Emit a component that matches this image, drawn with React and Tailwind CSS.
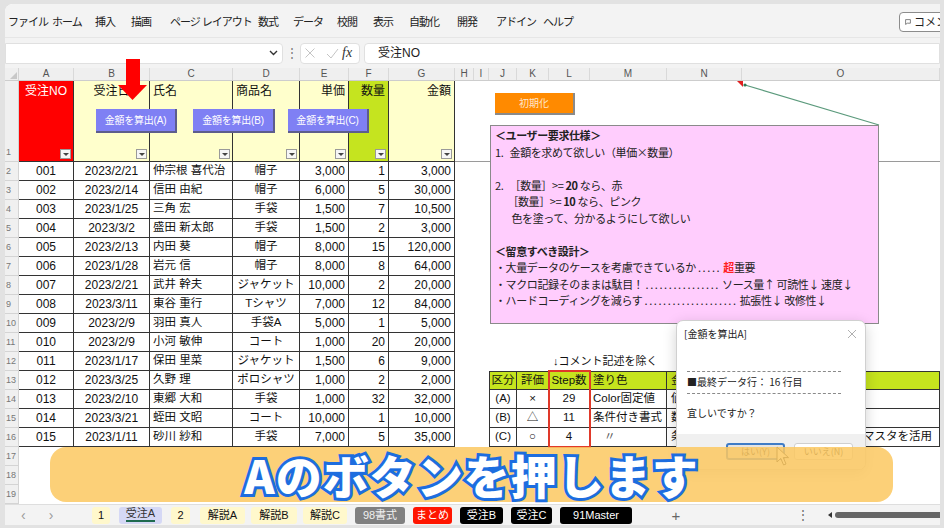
import React from 'react';

const data = [
  ['001', '2023/2/21', '仲宗根 喜代治', '帽子', '3,000', '1', '3,000'],
  ['002', '2023/2/14', '信田 由紀', '帽子', '6,000', '5', '30,000'],
  ['003', '2023/1/25', '三角 宏', '手袋', '1,500', '7', '10,500'],
  ['004', '2023/3/2', '盛田 新太郎', '手袋', '1,500', '2', '3,000'],
  ['005', '2023/2/13', '内田 葵', '帽子', '8,000', '15', '120,000'],
  ['006', '2023/1/28', '岩元 信', '帽子', '8,000', '8', '64,000'],
  ['007', '2023/2/21', '武井 幹夫', 'ジャケット', '10,000', '2', '20,000'],
  ['008', '2023/3/11', '東谷 重行', 'Tシャツ', '7,000', '12', '84,000'],
  ['009', '2023/2/9', '羽田 真人', '手袋A', '5,000', '1', '5,000'],
  ['010', '2023/2/9', '小河 敏伸', 'コート', '1,000', '20', '20,000'],
  ['011', '2023/1/17', '保田 里菜', 'ジャケット', '1,500', '6', '9,000'],
  ['012', '2023/3/25', '久野 理', 'ポロシャツ', '1,000', '2', '2,000'],
  ['013', '2023/2/10', '東郷 大和', '手袋', '1,000', '32', '32,000'],
  ['014', '2023/3/21', '蛭田 文昭', 'コート', '10,000', '1', '10,000'],
  ['015', '2023/1/11', '砂川 紗和', '手袋', '7,000', '5', '35,000'],
];

const cellCls = [
  'w-[55px] justify-center',
  'w-[76px] justify-center',
  'w-[83px] justify-start pl-[3px] text-[11.5px]',
  'w-[67px] justify-center text-[11.5px]',
  'w-[49px] justify-end pr-[3px]',
  'w-[40px] justify-end pr-[3px]',
  'w-[66px] justify-end pr-[3px]',
];

const hdrCols = [
  ['A', 'w-[55px]'], ['B', 'w-[76px]'], ['C', 'w-[83px]'], ['D', 'w-[67px]'], ['E', 'w-[49px]'],
  ['F', 'w-[40px]'], ['G', 'w-[66px]'], ['H', 'w-[19px]'], ['I', 'w-[15px]'], ['J', 'w-[28px]'],
  ['K', 'w-[32px]'], ['L', 'w-[41px]'], ['M', 'w-[77px]'], ['N', 'w-[75px]'], ['O', 'flex-1'],
];

const ribbonTabs = [
  ['ファイル', 'w-[44px]'], ['ホーム', 'w-[43px]'], ['挿入', 'w-[36px]'], ['描画', 'w-[39px]'],
  ['ページ レイアウト', 'w-[88px]'], ['数式', 'w-[35px]'], ['データ', 'w-[44px]'], ['校閲', 'w-[36px]'],
  ['表示', 'w-[36px]'], ['自動化', 'w-[48px]'], ['開発', 'w-[39px]'], ['アドイン', 'w-[47px]'], ['ヘルプ', 'w-[40px]'],
];

const sheetTabs = [
  ['1', 'w-[18px] bg-[#fff8cc]'],
  ['受注A', 'ml-[9px] w-[43px] bg-[#d5d8f5]'],
  ['2', 'ml-[9px] w-[19px] bg-[#fff8cc]'],
  ['解説A', 'ml-[10px] w-[45px] bg-[#fff8cc]'],
  ['解説B', 'ml-[6px] w-[46px] bg-[#fff8cc]'],
  ['解説C', 'ml-[6px] w-[44px] bg-[#fff8cc]'],
  ['98書式', 'ml-[8px] w-[50px] bg-[#808080] text-[#f0f0f0]'],
  ['まとめ', 'ml-[8px] w-[39px] bg-[#ff1500] text-white'],
  ['受注B', 'ml-[8px] w-[43px] bg-black text-white'],
  ['受注C', 'ml-[8px] w-[41px] bg-black text-white'],
  ['91Master', 'ml-[8px] w-[72px] bg-black text-white'],
];

const rt = [
  ['区分', '評価', 'Step数', '塗り色', '金額算出の方法'],
  ['(A)', '×', '29', 'Color固定値', '値を直接書込み'],
  ['(B)', '△', '11', '条件付き書式', '数式で計算'],
  ['(C)', '○', '4', '〃', null],
];

function RowHdr({ n, tall }) {
  return (
    <div className={`w-[14px] shrink-0 bg-[#f0f0f0] border-r border-b border-[#d4d4d4] text-[9px] text-[#777] flex pl-[1px] leading-none ${tall ? 'items-end pb-[4px]' : 'items-center'}`}>
      {n}
    </div>
  );
}

function Filter() {
  return (
    <div className="absolute right-[2px] bottom-[2px] w-[11px] h-[10px] bg-[#f6f6f6] border border-[#9a9a9a] flex items-center justify-center">
      <div className="w-0 h-0 border-l-[3px] border-r-[3px] border-t-[3px] border-l-transparent border-r-transparent border-t-[#444]" />
    </div>
  );
}

function Ribbon() {
  return (
    <div className="h-[33px] shrink-0 bg-[#f3f3f3] flex items-center pl-[3px] pt-[3px] text-[11px] text-[#222] tracking-[-1px] overflow-hidden">
      {ribbonTabs.map(([t, w]) => (
        <div key={t} className={`${w} shrink-0 whitespace-nowrap`}>{t}</div>
      ))}
      <div className="ml-auto mr-[-19px] w-[60px] h-[20px] shrink-0 border border-[#8c8c8c] rounded-[4px] bg-white flex items-center gap-[3px] pl-[5px] text-[11px] tracking-normal whitespace-nowrap">
        <svg width="10" height="10" viewBox="0 0 10 10"><path d="M1 1h8v6H4L1 9z" fill="none" stroke="#333" strokeWidth="1" /></svg>
        コメント
      </div>
    </div>
  );
}

function FormulaBar() {
  return (
    <div className="h-[31px] shrink-0 bg-[#f3f3f3] flex items-center border-t border-[#e6e6e6]">
      <div className="w-[278px] h-[21px] bg-white rounded-r-[4px] border border-[#e0e0e0] flex items-center justify-end pr-[4px]">
        <svg width="9" height="6" viewBox="0 0 9 6"><path d="M1 1l3.5 3.5L8 1" fill="none" stroke="#333" strokeWidth="1.4" /></svg>
      </div>
      <div className="w-[17px] text-center text-[#777] text-[12px] leading-none">⋮</div>
      <div className="w-[60px] h-[21px] bg-white rounded-[4px] border border-[#e0e0e0] flex items-center pl-[3px]">
        <svg width="12" height="12" viewBox="0 0 12 12"><path d="M1.5 1.5l9 9M10.5 1.5l-9 9" stroke="#c4c4c4" strokeWidth="1" /></svg>
        <svg className="ml-[10px]" width="13" height="11" viewBox="0 0 13 11"><path d="M1 6l4 4 7-9" fill="none" stroke="#c4c4c4" strokeWidth="1" /></svg>
        <span className="ml-[3px] font-['Liberation_Serif',serif] italic text-[14px] text-[#333] leading-none">fx</span>
      </div>
      <div className="ml-[4px] flex-1 h-[21px] bg-white rounded-l-[4px] border border-[#e0e0e0] flex items-center pl-[13px] text-[12px] text-[#222]">受注NO</div>
    </div>
  );
}

function ColHeader() {
  return (
    <div className="h-[13px] shrink-0 flex bg-[#efefef] border-b border-[#cdcdcd] text-[10px] text-[#555] leading-none">
      <div className="w-[14px] shrink-0 border-r border-[#d4d4d4] relative">
        <div className="absolute right-[1px] bottom-[1px] w-0 h-0 border-l-[7px] border-t-[7px] border-l-transparent border-t-transparent border-b-0 border-r-0 [border-bottom:7px_solid_#c8c8c8]" />
      </div>
      {hdrCols.map(([l, w]) => (
        <div key={l} className={`${w} shrink-0 border-r border-[#d9d9d9] flex items-center justify-center`}>{l}</div>
      ))}
    </div>
  );
}

function Row1() {
  return (
    <div className="flex h-[81px] shrink-0 text-[12px] leading-[16px]">
      <RowHdr n={1} tall />
      <div className="relative w-[55px] bg-[#ff0000] border-r border-b border-[#333] text-white text-center pt-[2px]">受注NO<Filter /></div>
      <div className="relative w-[76px] bg-[#ffffcc] border-r border-b border-[#333] text-center pt-[2px]">受注日<Filter /></div>
      <div className="relative w-[83px] bg-[#ffffcc] border-r border-b border-[#333] pl-[3px] pt-[2px]">氏名<Filter /></div>
      <div className="relative w-[67px] bg-[#ffffcc] border-r border-b border-[#333] pl-[3px] pt-[2px]">商品名<Filter /></div>
      <div className="relative w-[49px] bg-[#ffffcc] border-r border-b border-[#333] text-right pr-[3px] pt-[2px]">単価<Filter /></div>
      <div className="relative w-[40px] bg-[#c5e41f] border-r border-b border-[#333] text-right pr-[3px] pt-[2px]">数量<Filter /></div>
      <div className="relative w-[66px] bg-[#ffffcc] border-r border-b border-[#333] text-right pr-[3px] pt-[2px]">金額<Filter /></div>
      <div className="flex-1 border-b border-[#9a9a9a]" />
    </div>
  );
}

function RightPart({ n }) {
  if (n === 12) {
    return (
      <div className="flex-1 flex">
        <div className="w-[94px] shrink-0" />
        <div className="w-[118px] shrink-0 flex items-center pl-[4px] text-[11px] whitespace-nowrap">↓コメント記述を除く</div>
      </div>
    );
  }
  if (n >= 13 && n <= 16) {
    const r = rt[n - 13];
    const head = n === 13;
    const base = `border-r border-b border-[#333] flex items-center whitespace-nowrap overflow-hidden ${head ? 'bg-[#c6e41e] border-t' : 'bg-white'}`;
    return (
      <div className="flex-1 flex">
        <div className="w-[34px] shrink-0" />
        <div className={`w-[28px] shrink-0 border-l justify-center text-[11.5px] ${base}`}>{r[0]}</div>
        <div className={`w-[32px] shrink-0 justify-center text-[11.5px] ${base}`}>{r[1]}</div>
        <div className={`w-[41px] shrink-0 justify-center text-[11.5px] ${base}`}>{r[2]}</div>
        <div className={`w-[77px] shrink-0 justify-start text-[11.5px] ${n === 16 ? 'pl-[14px] text-[#555]' : 'pl-[3px]'} ${base}`}>{r[3]}</div>
        <div className={`flex-1 justify-start pl-[4px] text-[11.5px] ${base}`}>
          {r[4] !== null ? r[4] : (
            <>
              <span className="w-[192px] shrink-0 overflow-hidden">条件付き書式＋色</span>
              <span>マスタを活用</span>
            </>
          )}
        </div>
      </div>
    );
  }
  return <div className="flex-1" />;
}

function DataRow({ n }) {
  const r = data[n - 2];
  return (
    <div className="flex h-[19px] shrink-0 text-[12px]">
      <RowHdr n={n} />
      {r ? (
        r.map((v, i) => (
          <div key={i} className={`${cellCls[i]} shrink-0 border-r border-b border-[#333] flex items-center whitespace-nowrap`}>{v}</div>
        ))
      ) : (
        <div className="w-[436px] shrink-0" />
      )}
      <RightPart n={n} />
    </div>
  );
}

function TabBar() {
  return (
    <div className="h-[21px] shrink-0 bg-[#f3f3f3] flex items-center text-[11px] border-t border-[#dedede]">
      <div className="w-[87px] shrink-0 flex items-center text-[#9a9a9a] text-[14px] leading-none">
        <span className="ml-[16px]">‹</span>
        <span className="ml-[23px]">›</span>
      </div>
      {sheetTabs.map(([t, c]) => (
        <div key={t} className={`${c} h-[17px] shrink-0 rounded-[3px] flex items-center justify-center whitespace-nowrap leading-none`}>
          {t === '受注A' ? <span className="border-b-2 border-[#1f6b4f] pb-[1px] text-[#333]">{t}</span> : t}
        </div>
      ))}
      <div className="w-[88px] shrink-0 text-center text-[#666] text-[15px] leading-none">+</div>
      <div className="ml-[77px] w-[12px] shrink-0 text-center text-[#666] text-[12px] leading-none">⋮</div>
      <div className="ml-[19px] flex-1 flex items-center gap-[3px]">
        <div className="w-0 h-0 border-t-[3px] border-b-[3px] border-r-[4px] border-t-transparent border-b-transparent border-r-[#333]" />
        <div className="flex-1 h-[6px] rounded-l-full bg-[#666]" />
      </div>
    </div>
  );
}

function BlueBtn({ label, cls }) {
  return (
    <div className={`absolute ${cls} top-[109px] h-[24px] bg-[#7f80f4] border-r-2 border-b-2 border-[#5d5d8c] flex items-center justify-center text-white text-[10px] tracking-[-0.2px] whitespace-nowrap`}>
      {label}
    </div>
  );
}

function Dots({ children }) {
  return <span className="tracking-[1.6px]">{children}</span>;
}

export default function App() {
  return (
    <div className="relative w-[944px] h-[528px] bg-[#e2e2e2] pt-[4px] pl-[5px] pr-[4px] pb-[3px] overflow-hidden font-['Liberation_Sans','Noto_Sans_CJK_JP',sans-serif] text-[#111]">
      <div className="h-full flex flex-col bg-white rounded-tl-[8px] overflow-hidden">
        <Ribbon />
        <FormulaBar />
        <ColHeader />
        <Row1 />
        {Array.from({ length: 18 }).map((_, i) => (
          <DataRow key={i} n={i + 2} />
        ))}
        <TabBar />
      </div>

      {/* red arrow */}
      <svg className="absolute left-[117px] top-[59px]" width="30" height="42" viewBox="0 0 30 42">
        <rect x="9" y="0" width="14" height="27" fill="#ff0000" />
        <polygon points="1,26 30,26 15.5,41" fill="#ff0000" />
      </svg>

      <BlueBtn label="金額を算出(A)" cls="left-[96px] w-[81px]" />
      <BlueBtn label="金額を算出(B)" cls="left-[193px] w-[82px]" />
      <BlueBtn label="金額を算出(C)" cls="left-[288px] w-[81px]" />

      {/* orange button */}
      <div className="absolute left-[495px] top-[93px] w-[80px] h-[22px] bg-[#ff8a00] border-r-2 border-b-2 border-[#8a8a8a] flex items-center justify-center text-[10px] text-[#ffe6cc]">初期化</div>

      {/* comment connector */}
      <svg className="absolute left-[735px] top-[78px]" width="150" height="52" viewBox="0 0 150 52">
        <polygon points="2,3 8,3 8,9" fill="#e02020" />
        <line x1="10" y1="7" x2="144" y2="47" stroke="#5b9a7c" strokeWidth="1.2" />
        <circle cx="10" cy="7" r="1.6" fill="#2f7a55" />
      </svg>

      {/* pink note */}
      <div className="absolute left-[490px] top-[125px] w-[389px] h-[199px] bg-[#ffcdfd] border border-[#8a8a8a] pl-[4px] pt-[1px] text-[11px] leading-[16.5px] tracking-[-0.4px] font-['Noto_Sans_CJK_JP','Liberation_Sans',sans-serif] text-[#222] whitespace-pre">
        <div className="font-bold">＜ユーザー要求仕様＞</div>
        <div>1.   金額を求めて欲しい（単価×数量）</div>
        <div>&nbsp;</div>
        <div>2.   ［数量］&gt;= <b>20</b> なら、赤</div>
        <div>      ［数量］&gt;= <b>10</b> なら、ピンク</div>
        <div>        色を塗って、分かるようにして欲しい</div>
        <div>&nbsp;</div>
        <div className="font-bold">＜留意すべき設計＞</div>
        <div>・大量データのケースを考慮できているか <Dots>.....</Dots> <span className="text-[#ff2020] font-bold">超</span>重要</div>
        <div>・マクロ記録そのままは駄目！ <Dots>................</Dots> ソース量↑ 可読性↓ 速度↓</div>
        <div>・ハードコーディングを減らす <Dots>....................</Dots> 拡張性↓ 改修性↓</div>
      </div>

      {/* Step count red frame */}
      <div className="absolute left-[548px] top-[370px] w-[43px] h-[78px] border-2 border-[#e0392a]" />

      {/* dialog */}
      <div className="absolute left-[676px] top-[320px] w-[190px] h-[150px] bg-white rounded-[7px] border border-[#d0d0d0] shadow-[0_4px_14px_rgba(0,0,0,0.18)] flex flex-col overflow-hidden text-[10px] text-[#222] font-['Noto_Sans_CJK_JP','Liberation_Sans',sans-serif]">
        <div className="flex items-center pl-[7px] pr-[8px] pt-[6px] leading-[14px]">
          <span>[金額を算出A]</span>
          <svg className="ml-auto" width="10" height="10" viewBox="0 0 10 10"><path d="M1 1l8 8M9 1l-8 8" stroke="#b0b0b0" strokeWidth="1" /></svg>
        </div>
        <div className="mt-[30px] ml-[10px] w-[154px] border-t border-dashed border-[#8a8a8a]" />
        <div className="mt-[2px] ml-[10px] leading-[16px]">■最終データ行： 16 行目</div>
        <div className="mt-[3px] ml-[10px] w-[154px] border-t border-dashed border-[#8a8a8a]" />
        <div className="mt-[12px] ml-[10px] leading-[14px]">宜しいですか？</div>
        <div className="flex-1" />
        <div className="h-[35px] bg-[#f0f0f0] flex items-start pt-[9px] pl-[49px] gap-[9px]">
          <div className="w-[59px] h-[17px] rounded-[3px] border-2 border-[#3f7cc6] bg-[#e4e4e4] flex items-center justify-center text-[9px]">はい(Y)</div>
          <div className="w-[59px] h-[17px] rounded-[3px] border border-[#cfcfcf] bg-white flex items-center justify-center text-[9px]">いいえ(N)</div>
        </div>
      </div>

      {/* cursor */}
      <svg className="absolute left-[776px] top-[446px]" width="14" height="21" viewBox="0 0 14 21">
        <path d="M1 1 L1 16 L4.8 12.4 L7.6 19 L10 18 L7.3 11.6 L12.5 11.6 Z" fill="#fff" stroke="#222" strokeWidth="1" strokeLinejoin="round" />
      </svg>

      {/* subtitle */}
      <div className="absolute left-[50px] top-[447px] w-[843px] h-[55px] rounded-[16px] bg-[rgba(252,200,98,0.86)] flex items-center justify-center">
        <span className="text-[46px] leading-none font-black text-white tracking-[1px] font-['Noto_Sans_CJK_JP',sans-serif] [-webkit-text-stroke:6px_#1d6ddf] [paint-order:stroke_fill] pb-[2px]">
          Aのボタンを押します
        </span>
      </div>
    </div>
  );
}
